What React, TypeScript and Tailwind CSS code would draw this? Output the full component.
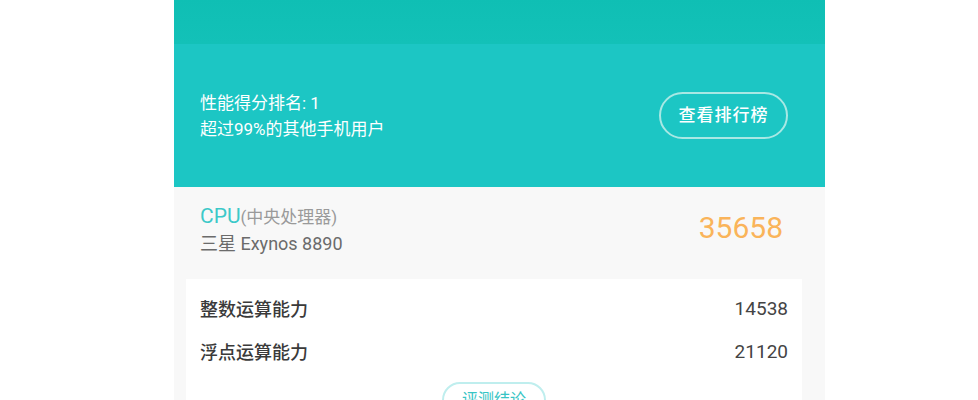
export default function App() {
  const font = { fontFamily: '"Roboto", "Noto Sans CJK SC", sans-serif' };
  return (
    <div className="w-[978px] h-[400px] bg-white overflow-hidden" style={font}>
      <div className="flex flex-col ml-[174px] w-[651px] h-[400px]">
        <div className="flex flex-col shrink-0 h-[187px] bg-[#1cc6c4]">
          <div className="h-[44px] bg-gradient-to-b from-[#0fbfb4] to-[#13c1b8]" />
          <div className="flex flex-1 items-center justify-between pl-[26px] pr-[37px]">
            <div className="flex flex-col text-white text-[17px] leading-[26px]">
              <span>性能得分排名: 1</span>
              <span>超过99%的其他手机用户</span>
            </div>
            <button className="h-[47px] w-[129px] rounded-full border-2 border-[#a8e8e4] text-white text-[17px] font-medium tracking-[1px]">
              查看排行榜
            </button>
          </div>
        </div>
        <div className="flex flex-col flex-1 min-h-0 overflow-hidden bg-[#f8f8f8] px-[12px]">
          <div className="flex shrink-0 items-center justify-between pt-[17px] pl-[14px] pr-[30px]">
            <div className="flex flex-col">
              <div className="flex items-baseline">
                <span className="text-[21px] text-[#3cc9c9] leading-[25px]">CPU</span>
                <span className="text-[17px] text-[#9a9a9a]">(中央处理器)</span>
              </div>
              <span className="text-[18px] text-[#6b6b6b] leading-[26px]">三星 Exynos 8890</span>
            </div>
            <span className="text-[30px] text-[#fab45a] mt-[-6px]">35658</span>
          </div>
          <div className="flex flex-col shrink-0 mt-[22px] bg-white px-[14px] pt-[16px] h-[140px] mr-[11px]">
            <div className="flex justify-between items-center text-[18px] text-[#3a3a3a] h-[30px] font-medium">
              <span>整数运算能力</span>
              <span className="text-[#444] font-normal text-[19px]">14538</span>
            </div>
            <div className="flex justify-between items-center text-[18px] text-[#3a3a3a] h-[30px] mt-[13px] font-medium">
              <span>浮点运算能力</span>
              <span className="text-[#444] font-normal text-[19px]">21120</span>
            </div>
            <div className="flex justify-center mt-[14px]">
              <span className="h-[36px] px-[18px] rounded-full border-2 border-[#bfeeee] text-[#36c4c4] text-[16px] leading-[32px]">
                评测结论
              </span>
            </div>
          </div>
        </div>
      </div>
    </div>
  );
}
